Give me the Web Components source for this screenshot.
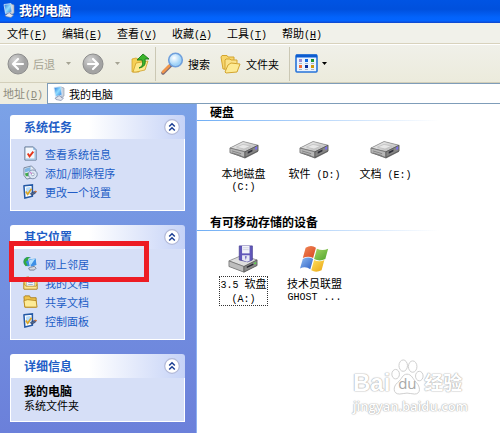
<!DOCTYPE html>
<html lang="zh-CN">
<head>
<meta charset="utf-8">
<meta name="viewport" content="width=device-width, initial-scale=1">
<title>我的电脑</title>
<style>
  html, body { height: 100%; margin: 0; }
  body {
    font-family: "Noto Sans CJK SC", sans-serif;
    font-size: 11px;
    line-height: 14px;
    color: #000;
    --mono: "Liberation Mono", "Noto Sans CJK SC", monospace;
    --link: #215dc6;
    overflow: hidden;
  }
</style>
</head>
<body>
<explorer-window>
  <title-bar slot="top">我的电脑</title-bar>
  <menu-bar slot="top"></menu-bar>
  <tool-bar slot="top"></tool-bar>
  <address-bar slot="top" value="我的电脑"></address-bar>

  <task-panel slot="side" heading="系统任务">
    <task-link icon="info">查看系统信息</task-link>
    <task-link icon="addremove">添加/删除程序</task-link>
    <task-link icon="settings">更改一个设置</task-link>
  </task-panel>
  <task-panel slot="side" heading="其它位置">
    <task-link icon="network" marked>网上邻居</task-link>
    <task-link icon="docs">我的文档</task-link>
    <task-link icon="folder">共享文档</task-link>
    <task-link icon="settings">控制面板</task-link>
  </task-panel>
  <task-panel slot="side" heading="详细信息">
    <detail-text name="我的电脑">系统文件夹</detail-text>
  </task-panel>

  <item-group heading="硬盘">
    <drive-item icon="disk" name="本地磁盘" letter="(C:)" wrap></drive-item>
    <drive-item icon="disk" name="软件" letter="(D:)"></drive-item>
    <drive-item icon="disk" name="文档" letter="(E:)"></drive-item>
  </item-group>
  <item-group heading="有可移动存储的设备">
    <drive-item icon="floppy" prefix="3.5" name="软盘" letter="(A:)" wrap selected></drive-item>
    <drive-item icon="windows" name="技术员联盟" letter="GHOST ..." wrap></drive-item>
  </item-group>

  <site-mark slot="mark"></site-mark>
</explorer-window>

<script>
// 图标
const icons = {
  computer: `<svg viewBox="0 0 12 15"><defs><linearGradient id="scr" x2="1" y2="1"><stop stop-color="#1d6fd8"/><stop offset=".5" stop-color="#8fdcff"/><stop offset="1" stop-color="#1f74dc"/></linearGradient></defs>
    <path d="M8 1l3 1v8l-3 2z" fill="#cdd3dc" stroke="#8795aa" stroke-width=".6"/><path d="M1 1.500L8 .6l1 8.400-6.500 1.500z" fill="url(#scr)" stroke="#d5e6f7" stroke-width=".8"/><path d="M4 10.500l3-.8 1 1.500 2.500 1L8 14.500l-5-1-1-1.500 2-.5z" fill="#e3e5ec" stroke="#6a78a0" stroke-width=".6"/></svg>`,
  circleLeft: `<svg viewBox="0 0 22 22"><defs><radialGradient id="g" cx=".35" cy=".3"><stop stop-color="#d2d2d2"/><stop offset="1" stop-color="#a3a3a3"/></radialGradient></defs><circle cx="11" cy="11" r="10" fill="url(#g)" stroke="#8d8d8d"/><path d="M16 11H7M11 6l-5 5 5 5" fill="none" stroke="#fff" stroke-width="2.2" stroke-linecap="round" stroke-linejoin="round"/></svg>`,
  circleRight: `<svg viewBox="0 0 22 22"><defs><radialGradient id="h" cx=".35" cy=".3"><stop stop-color="#d2d2d2"/><stop offset="1" stop-color="#a3a3a3"/></radialGradient></defs><circle cx="11" cy="11" r="10" fill="url(#h)" stroke="#8d8d8d"/><path d="M6 11h9M11 6l5 5-5 5" fill="none" stroke="#fff" stroke-width="2.2" stroke-linecap="round" stroke-linejoin="round"/></svg>`,
  up: `<svg viewBox="0 0 19 21"><path d="M1 6l4-1 2 1h5v4l-4 9H1z" fill="#f6cf56" stroke="#d3a62c" stroke-width=".8"/><path d="M2 19l3-9 12-2-3 9-9 2z" fill="#fde98c" stroke="#cfa029" stroke-width=".8"/><path d="M8 15c4-2 4-4 3-8H6l6-6 6 5h-4c1 6-1 8-6 9z" fill="#3bb52c" stroke="#1b7c17" stroke-width=".9"/></svg>`,
  search: `<svg viewBox="0 0 23 23"><defs><radialGradient id="lens" cx=".4" cy=".35"><stop stop-color="#fff"/><stop offset="1" stop-color="#9fd3f8"/></radialGradient></defs><path d="M2 21l8-8" stroke="#7f6a73" stroke-width="3.500" stroke-linecap="round"/><path d="M2 20l6-6" stroke="#f0954a" stroke-width="2.600" stroke-linecap="round"/><circle cx="14.500" cy="8" r="6.800" fill="url(#lens)" stroke="#6f9fdc" stroke-width="1.600"/></svg>`,
  folders: `<svg viewBox="0 0 22 20"><path d="M1 3l1-1.500h5L8 3h6v12H3z" fill="#f8d66b" stroke="#d3a530"/><path d="M5 16V6l1-1h4l1 1h6v3" fill="#fae28a" stroke="#d3a530"/><path d="M5 18l3-7 3-2 9 1-3 8-11 1z" fill="#fdea93" stroke="#d3a530" stroke-linejoin="round"/></svg>`,
  views: `<svg viewBox="0 0 23 19"><rect x="1" y="1" width="21" height="17" rx="1" fill="#eaf3ff" stroke="#2673d9" stroke-width="1.600"/><path d="M1 2h21" stroke="#0c5cd0" stroke-width="3"/><path fill="#9b8bd0" d="M4 5h3v3H4z"/><path fill="#1268e0" d="M10 5h3v3h-3z"/><path fill="#1a9430" d="M16 5h3v3h-3z"/><path fill="#f46b35" d="M4 11h3v3H4z"/><path fill="#0a2c99" d="M10 11h3v3h-3z"/><path fill="#cf9a0c" d="M16 11h3v3h-3z"/><path d="M4 9.500h3m3 0h3m3 0h3M4 15.500h3m3 0h3m3 0h3" stroke="#a9b6c9"/></svg>`,
  caret: `<svg viewBox="0 0 5 3"><path d="M0 0h5L2.500 3z" fill="currentColor"/></svg>`,
  chevrons: `<svg viewBox="0 0 16 16"><circle cx="8" cy="8" r="7.300" fill="#fff" stroke="#b2b9d8" stroke-width="1.200"/><path d="M5.200 7.500L8 4.700l2.800 2.800M5.200 11.500L8 8.700l2.800 2.800" fill="none" stroke="#1c3f94" stroke-width="1.500"/></svg>`,
  info: `<svg viewBox="0 0 16 16"><path d="M2 1h9l3 3v11H2z" fill="#f3f8fd" stroke="#5b718f"/><path d="M11 1v3h3z" fill="#7aa7d6"/><path d="M3 14h10V5" fill="none" stroke="#9fc3e4" stroke-width="1.500"/><path d="M5 8l2 3 4-5" fill="none" stroke="#e5371c" stroke-width="2"/></svg>`,
  addremove: `<svg viewBox="0 0 16 16"><path d="M1 3l8-2 4 4v8l-9 2-3-4z" fill="#e4eaf2" stroke="#74849d"/><path d="M2 4l6-2v4L2 8z" fill="#7fb5e4"/><path d="M2 9l4-1v4H3z" fill="#41a94b"/><circle cx="10.500" cy="10" r="4.700" fill="#dce7f5" stroke="#7b8bab"/><circle cx="10.500" cy="10" r="1.500" fill="#fff" stroke="#7b8bab" stroke-width=".7"/><path d="M7.500 8l2 1" stroke="#d25bc2"/></svg>`,
  settings: `<svg viewBox="0 0 16 16"><path d="M1 2l9-1v12l-8 2z" fill="#fff" stroke="#2459a6" stroke-width="1.600"/><path d="M3 4l5-1v8l-4 1z" fill="#b9dcfa"/><path d="M3 8l2 3 4-6" fill="none" stroke="#dda524" stroke-width="1.700"/><path d="M8 10l4-2 2 0-1 2-4 2z" fill="#56698d" stroke="#243c68" stroke-width=".7"/><path d="M13 7l2 1-1 1-2-1z" fill="#d77434"/></svg>`,
  network: `<svg viewBox="0 0 16 16"><circle cx="5.500" cy="6" r="5" fill="#368ce0"/><path d="M1 4c2-3 4-3 6-3L6 4 3 6l2 4-2 1C1 9 0 7 1 4z" fill="#34a83f"/><path d="M6 3l8-1 1 8-7 2z" fill="#3e8fe6" stroke="#e0e9f5"/><path d="M7 4l6-1-5 7z" fill="#b4e2ff"/><path d="M8 12l4-1 2 2-2 2-5 0-1-2z" fill="#d5d8df" stroke="#5f6c86" stroke-width=".8"/></svg>`,
  docs: `<svg viewBox="0 0 16 16"><path d="M1 3l5-1 1 2h8v11H1z" fill="#f8d772" stroke="#b7861d"/><path d="M4 3h8v9H4z" fill="#fff" stroke="#8aa3c4" stroke-width=".7"/><path d="M5.500 6h5M5.500 8h5M5.500 10h5" stroke="#87a6cb"/><path d="M1 15V9l2 3h11l1-2v5z" fill="#fce694" stroke="#b7861d" stroke-width=".7"/></svg>`,
  folder: `<svg viewBox="0 0 16 16"><path d="M1 3l1-1h5l1 2h6v10H2z" fill="#efc44d" stroke="#ad7e17"/><path d="M2 14L1 7l4-1 9 1 1 7z" fill="#fdeb97" stroke="#b98b22" stroke-linejoin="round"/></svg>`,
  disk: `<svg viewBox="0 0 32 30"><defs><linearGradient id="d" x2="1" y2="1"><stop stop-color="#f8f8f8"/><stop offset="1" stop-color="#adadad"/></linearGradient></defs><path d="M1 14l14-7 16 4v7l-14 7L1 19z" fill="#777"/><path d="M1 14l14-7 16 4-14 7z" fill="url(#d)" stroke="#8c8c8c" stroke-width=".8"/><path d="M1 14l16 4v6L1 19z" fill="#b8b8b8" stroke="#666" stroke-width=".7"/><path d="M17 18l14-7v6l-14 7z" fill="#858585" stroke="#4c4c4c" stroke-width=".7"/><path d="M20 18l5-2.500v2L20 20z" fill="#2f2f38"/><path d="M28 13l2-1v3l-2 1z" fill="#7a6df0"/><path d="M8 13l7-3 8 2-7 3z" fill="#e7e7e7" stroke="#aaa" stroke-width=".5"/><path d="M3 17l10 3M3 19l10 3" stroke="#6d6d6d" stroke-width=".7"/></svg>`,
  floppy: `<svg viewBox="0 0 32 30"><path d="M1 17l14-6 16 5v6l-14 7L1 23z" fill="#888"/><path d="M1 17l14-6 16 5-14 7z" fill="#dedede" stroke="#8c8c8c" stroke-width=".8"/><path d="M1 17l16 6v6L1 23z" fill="#bdbdbd" stroke="#666" stroke-width=".7"/><path d="M17 23l14-7v6l-14 7z" fill="#8a8a8a" stroke="#4c4c4c" stroke-width=".7"/><path d="M20 24l7-3.500" stroke="#25252d" stroke-width="1.500"/><path d="M28 20l2-1" stroke="#55d645" stroke-width="1.500"/><path d="M12 1h14v15l-5 2-9-2z" fill="#6157ba" stroke="#4a4294" stroke-width=".8"/><path d="M15 1h8v8h-8z" fill="#f2f3fa"/><path d="M16 3h6M16 5h6" stroke="#c0c2d6" stroke-width=".7"/><path d="M15 11h8v6l-3 1-5-2z" fill="#e7e8f5"/><path d="M18 12h2l-1 4z" fill="#6157ba"/></svg>`,
  windows: `<svg viewBox="0 0 32 30"><defs><linearGradient id="r" x2="1" y2="1"><stop stop-color="#f08a5a"/><stop offset="1" stop-color="#d9461f"/></linearGradient><linearGradient id="v" x2="1" y2="1"><stop stop-color="#a5d765"/><stop offset="1" stop-color="#4fa32b"/></linearGradient><linearGradient id="b" x2="1" y2="1"><stop stop-color="#8fbcf3"/><stop offset="1" stop-color="#2c5fc4"/></linearGradient><linearGradient id="y" x2="1" y2="1"><stop stop-color="#ffe05f"/><stop offset="1" stop-color="#e9a512"/></linearGradient></defs>
    <path d="M6 3q6-4 11 0l-3 11q-5-3-11 0z" fill="url(#r)"/><path d="M18 4q6 3 12 0l-3 11q-6 3-12 0z" fill="url(#v)"/><path d="M3 15q6-3 11 0l-3 11q-5-4-11-1z" fill="url(#b)"/><path d="M15 16q6 3 11 0l-3 11q-6 3-11 0z" fill="url(#y)"/></svg>`
};

class BaseElement extends HTMLElement {
  constructor() {
    super();
    this.attachShadow({ mode: 'open' });
  }
  connectedCallback() {
    this.shadowRoot.innerHTML = `<style>
      * { box-sizing: border-box; }
      svg { display: block; width: 100%; height: 100%; }
      .icon { display: block; flex: none; }
      button { font: inherit; color: inherit; background: none; border: 0; padding: 0; margin: 0; }
    </style>` + this.render();
  }
  attr(name) {
    return this.getAttribute(name) || '';
  }
}

class ExplorerWindow extends BaseElement {
  render() {
    return `
      <style>
        :host { display: flex; flex-direction: column; position: relative; min-height: 100%; background: #fff; }
        .body { display: flex; flex: 1; }
        aside {
          width: 196px; flex: none; padding: 11px 11px 10px 10px;
          display: flex; flex-direction: column; gap: 14px;
          background: linear-gradient(#7ba2e7, #6b80da);
        }
        main { flex: 1; min-width: 0; border-left: 1px solid #8db0f0; display: flex; flex-direction: column; gap: 20px; }
      </style>
      <header><slot name="top"></slot></header>
      <div class="body">
        <aside><slot name="side"></slot></aside>
        <main><slot></slot></main>
      </div>
      <slot name="mark"></slot>`;
  }
}

class TitleBar extends BaseElement {
  render() {
    return `
      <style>
        :host {
          display: flex; align-items: center; gap: 4px; height: 23px; padding: 0 3px 3px;
          box-sizing: border-box;
          background: linear-gradient(#0054e3, #0050dd 40%, #0363fb 75%, #0364ff 90%, #1145c9);
        }
        .icon { width: 12px; height: 15px; }
        h1 { margin: 0; font-size: 13px; line-height: 16px; color: #fff; text-shadow: 1px 1px #0a2a8c; }
      </style>
      <span class="icon">${icons.computer}</span><h1><slot></slot></h1>`;
  }
}

class MenuBar extends BaseElement {
  render() {
    const menus = [['文件', 'F'], ['编辑', 'E'], ['查看', 'V'], ['收藏', 'A'], ['工具', 'T'], ['帮助', 'H']];
    return `
      <style>
        :host { display: block; background: #f1f1ea; border-bottom: 1px solid #d8d2bd; }
        nav { display: flex; gap: 15px; height: 20px; padding: 0 7px; align-items: center; }
        button { width: 40px; white-space: nowrap; text-align: left; }
        span { font-family: var(--mono); font-size: 10px; line-height: 10px; }
      </style>
      <nav>${menus.map(([name, key]) => `<button>${name}<span>(<u>${key}</u>)</span></button>`).join('')}</nav>`;
  }
}

class ToolBar extends BaseElement {
  render() {
    return `
      <style>
        :host { display: block; border-top: 1px solid #fff; border-bottom: 1px solid #d3cfba; background: linear-gradient(#f0f0e9, #ecebdc); }
        div { display: flex; align-items: center; height: 37px; padding-left: 7px; }
        button { display: flex; align-items: center; gap: 4px; }
        button:disabled { color: #a5a393; }
        .round { width: 22px; height: 22px; }
        .up { width: 19px; height: 21px; }
        .search { width: 23px; height: 23px; }
        .folders { width: 22px; height: 20px; }
        .views { width: 23px; height: 19px; }
        .caret { width: 5px; height: 3px; }
        .drop { padding: 0 11px; }
        i { width: 1px; height: 34px; background: #cbc8b4; margin: 0 5px; }
        .gap { margin-left: 10px; }
      </style>
      <div>
        <button disabled><span class="icon round">${icons.circleLeft}</span>后退</button>
        <button class="drop" disabled aria-label="后退列表"><span class="icon caret">${icons.caret}</span></button>
        <button disabled aria-label="前进"><span class="icon round">${icons.circleRight}</span></button>
        <button class="drop" disabled aria-label="前进列表"><span class="icon caret">${icons.caret}</span></button>
        <button aria-label="向上"><span class="icon up">${icons.up}</span></button>
        <i></i>
        <button><span class="icon search">${icons.search}</span>搜索</button>
        <button class="gap"><span class="icon folders">${icons.folders}</span>文件夹</button>
        <i class="gap"></i>
        <button aria-label="查看方式"><span class="icon views">${icons.views}</span><span class="icon caret">${icons.caret}</span></button>
      </div>`;
  }
}

class AddressBar extends BaseElement {
  render() {
    return `
      <style>
        :host { display: flex; align-items: stretch; height: 21px; background: #eeede0; }
        label { width: 47px; padding: 3px 0 0 3px; color: #8d8b7c; white-space: nowrap; }
        label span { font-family: var(--mono); font-size: 10px; line-height: 10px; }
        .box { flex: 1; display: flex; align-items: center; gap: 4px; padding-left: 5px; background: #fff; border: 1px solid #7f9db9; border-right: 0; }
        .icon { width: 12px; height: 15px; }
        input { flex: 1; min-width: 0; border: 0; padding: 0; font: inherit; outline: 0; background: none; }
      </style>
      <label for="address">地址<span>(<u>D</u>)</span></label>
      <div class="box"><span class="icon">${icons.computer}</span><input id="address" value="${this.attr('value')}"></div>`;
  }
}

class TaskPanel extends BaseElement {
  render() {
    return `
      <style>
        header {
          display: flex; align-items: center; justify-content: space-between;
          height: 24px; padding: 0 5px 0 14px;
          border-radius: 3px 3px 0 0;
          background: linear-gradient(90deg, #fff 45%, #c6d3f7);
        }
        h2 { margin: 0; font-size: 12px; line-height: 16px; color: var(--link); }
        button { width: 16px; height: 16px; }
        section { padding: 5px 12px 9px; background: #d6dff7; border: 1px solid #fff; border-top: 0; }
        :host { display: block; }
      </style>
      <header><h2>${this.attr('heading')}</h2><button aria-label="折叠">${icons.chevrons}</button></header>
      <section><slot></slot></section>`;
  }
}

class TaskLink extends BaseElement {
  render() {
    return `
      <style>
        :host { display: block; position: relative; }
        a { display: flex; align-items: center; gap: 7px; height: 19px; color: var(--link); text-decoration: none; white-space: nowrap; }
        .icon { width: 15px; height: 15px; }
        /* 红框标记，盖在相邻行之上 */
        .mark { position: absolute; z-index: 1; top: -13px; left: -14px; width: 140px; height: 41px; border: 5px solid #ed1c24; pointer-events: none; }
      </style>
      <a href="#"><span class="icon">${icons[this.attr('icon')]}</span><slot></slot></a>
      ${this.hasAttribute('marked') ? '<div class="mark"></div>' : ''}`;
  }
}

class DetailText extends BaseElement {
  render() {
    return `
      <style>
        :host { display: block; padding: 1px 1px 0; line-height: 14px; }
        b { display: block; font-size: 12px; }
      </style>
      <b>${this.attr('name')}</b><slot></slot>`;
  }
}

class ItemGroup extends BaseElement {
  render() {
    return `
      <style>
        :host { display: block; }
        h2 { margin: 0; padding-left: 13px; font-size: 12px; line-height: 16px; }
        hr { height: 1px; margin: 0; border: 0; width: 80%; background: linear-gradient(90deg, #70aef5, #fff); }
        div { display: flex; align-items: flex-start; padding: 13px 0 0 11px; }
      </style>
      <h2>${this.attr('heading')}</h2><hr>
      <div><slot></slot></div>`;
  }
}

class DriveItem extends BaseElement {
  render() {
    const selected = this.hasAttribute('selected');
    const wrap = this.hasAttribute('wrap');
    const prefix = this.attr('prefix');
    return `
      <style>
        :host { display: flex; width: 71px; justify-content: center; }
        button { display: flex; flex-direction: column; align-items: center; gap: 2px; line-height: 12px; }
        .icon { width: 30px; height: 30px; }
        .label { border: 1px dotted transparent; white-space: pre; }
        .selected { border-color: #333; }
        .en { font-family: var(--mono); font-size: 10px; line-height: 10px; }
      </style>
      <button>
        <span class="icon">${icons[this.attr('icon')]}</span>
        <span class="label ${selected ? 'selected' : ''}">${prefix ? `<span class="en">${prefix} </span>` : ''}${this.attr('name')}${wrap ? '<br>' : ''}<span class="en">${wrap ? '' : ' '}${this.attr('letter')}</span></span>
      </button>`;
  }
}

class SiteMark extends BaseElement {
  render() {
    return `
      <style>
        :host { position: absolute; right: 32px; bottom: 20px; color: #fff; font-family: "Open Sans", "Noto Sans CJK SC", sans-serif; }
        .row { display: flex; align-items: flex-end; padding-bottom: 4px; }
        .row, p { text-shadow: 0 0 1px #b0b0b0, 0 0 1px #b0b0b0, 0 0 2px #ccc; }
        .big { font-family: "Liberation Sans", sans-serif; font-size: 24px; line-height: 24px; font-weight: bold; }
        .cn { font-size: 19px; line-height: 24px; font-weight: bold; }
        .paw { width: 34px; height: 36px; position: relative; }
        .paw b { position: absolute; left: 0; right: 0; bottom: 4px; text-align: center; font: 15px/15px "Open Sans", sans-serif; color: #a8a8a8; text-shadow: none; }
        p { margin: 0; font-size: 13px; line-height: 14px; font-weight: 600; }
      </style>
      <div class="row">
        <span class="big">Bai</span>
        <span class="paw"><svg viewBox="0 0 34 38"><g fill="#fff" stroke="#ccc"><ellipse cx="5" cy="16" rx="4" ry="5"/><ellipse cx="13" cy="7" rx="4.500" ry="6"/><ellipse cx="23" cy="8" rx="4.500" ry="6"/><ellipse cx="30" cy="18" rx="4" ry="5"/><path d="M17 16c5 0 6 5 10 9s5 12-2 12c-3 0-5-1-8-1s-5 1-8 1c-7 0-7-8-2-12s5-9 10-9z"/></g></svg><b>du</b></span>
        <span class="cn">经验</span>
      </div>
      <p>jingyan.baidu.com</p>`;
  }
}

customElements.define('explorer-window', ExplorerWindow);
customElements.define('title-bar', TitleBar);
customElements.define('menu-bar', MenuBar);
customElements.define('tool-bar', ToolBar);
customElements.define('address-bar', AddressBar);
customElements.define('task-panel', TaskPanel);
customElements.define('task-link', TaskLink);
customElements.define('detail-text', DetailText);
customElements.define('item-group', ItemGroup);
customElements.define('drive-item', DriveItem);
customElements.define('site-mark', SiteMark);
</script>
</body>
</html>
